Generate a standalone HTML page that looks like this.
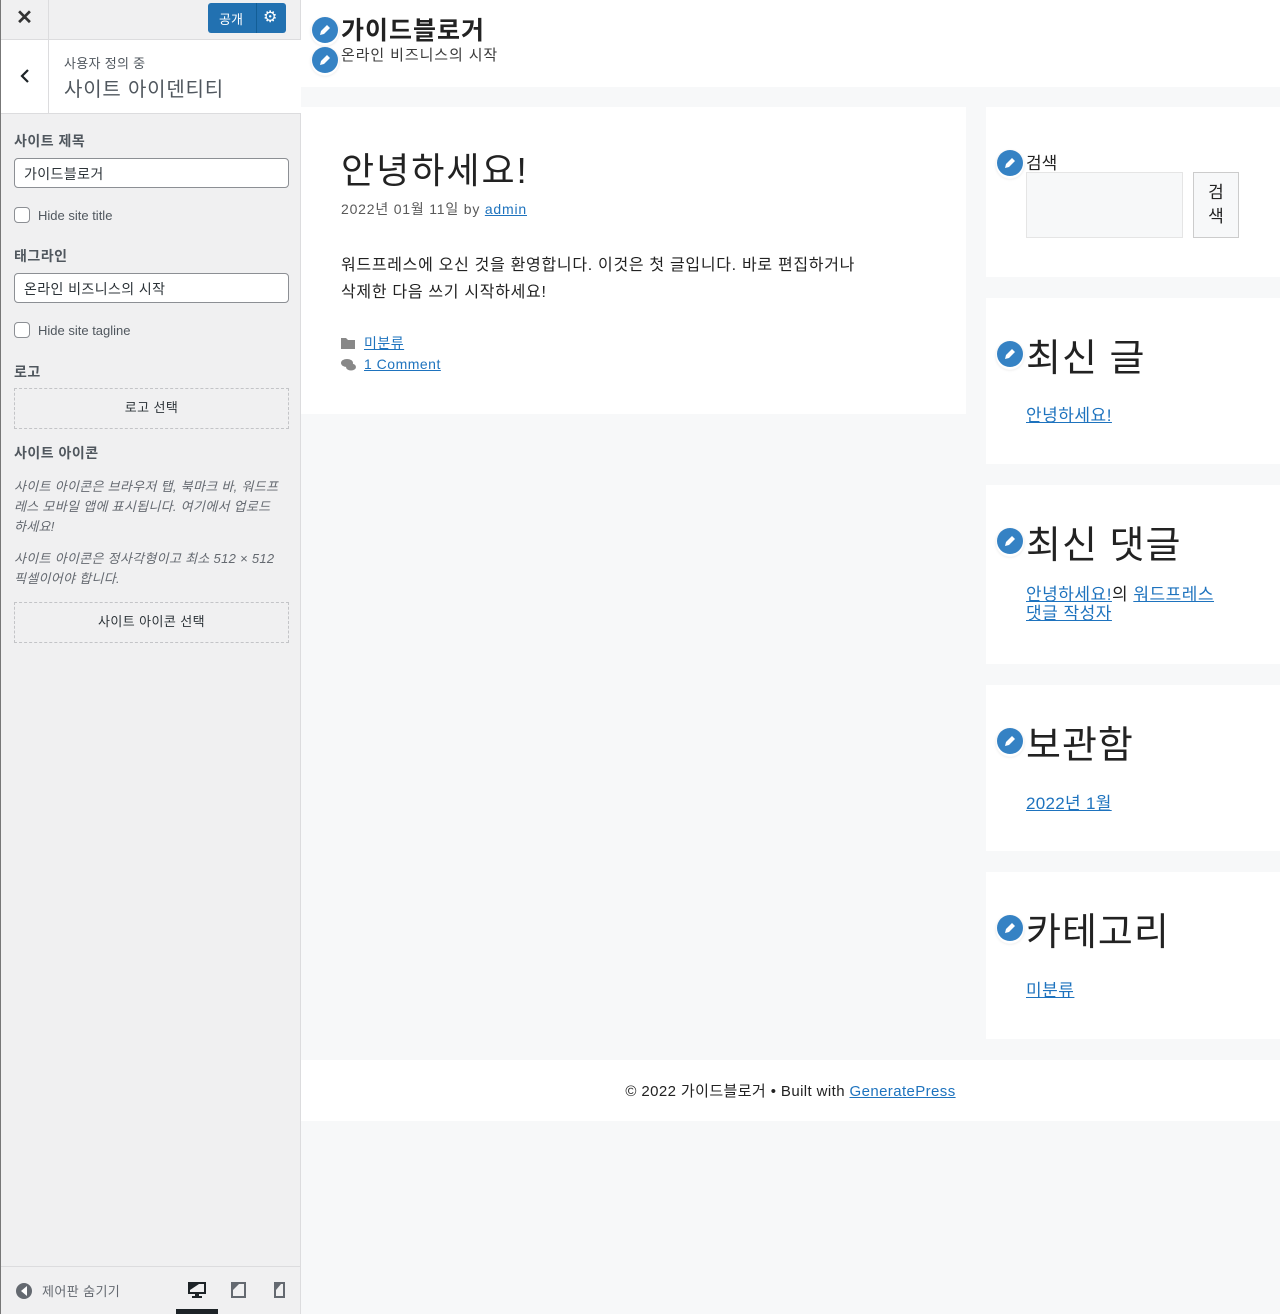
<!DOCTYPE html>
<html><head><meta charset="utf-8"><style>
*{box-sizing:border-box;margin:0;padding:0}
body{width:1280px;height:1314px;position:relative;overflow:hidden;background:#f7f8f9;font-family:"Liberation Sans","Noto Sans CJK KR",sans-serif;color:#222}
.a{position:absolute}
a{color:#1e73be;text-decoration:underline}
.pen{position:absolute;width:26px;height:26px;border-radius:50%;background:#3582c4;box-shadow:0 2px 1px 1px #fff,0 2px 3px rgba(0,0,0,.25)}
.pen svg{position:absolute;left:6px;top:6px}
#left{left:0;top:0;width:301px;height:1314px;background:#f0f0f1;border-right:1px solid #dcdcde;border-left:1px solid #777}
.lbl{font-size:14px;font-weight:bold;color:#50575e;letter-spacing:.5px}
.inp{position:absolute;left:13px;width:275px;height:30px;background:#fff;border:1px solid #8c8f94;border-radius:4px;font-size:14px;padding:5px 9px;color:#2c3338;letter-spacing:.4px}
.cb{position:absolute;left:13px;width:16px;height:16px;border:1px solid #8c8f94;border-radius:4px;background:#fff}
.cbl{position:absolute;left:37px;font-size:13px;color:#50575e}
.dash{position:absolute;left:13px;width:275px;border:1px dashed #c3c4c7;text-align:center;font-size:13px;color:#2c3338;letter-spacing:.4px}
.desc{position:absolute;left:13px;width:276px;font-size:13px;font-style:italic;color:#646970;line-height:20px;letter-spacing:.3px}
.w{position:absolute;left:986px;width:294px;background:#fff}
.wt{position:absolute;left:40px;font-size:38px;color:#222;line-height:1;letter-spacing:1px}
</style></head><body>
<div id="left" class="a">
 <div class="a" style="left:0;top:0;width:300px;height:40px;border-bottom:1px solid #dcdcde"></div>
 <div class="a" style="left:0;top:0;width:48px;height:40px;border-right:1px solid #dcdcde;font-size:20px;text-align:center;line-height:36px;color:#333;font-weight:bold">✕</div>
 <div class="a" style="left:207px;top:3px;width:78px;height:30px;background:#2271b1;border-radius:3px;color:#fff;font-size:13px">
  <span class="a" style="left:11px;top:6px">공개</span>
  <div class="a" style="left:48px;top:0;width:1px;height:30px;background:#135e96"></div>
  <span class="a" style="left:55px;top:4px;font-size:16px">⚙</span>
 </div>
 <div class="a" style="left:0;top:40px;width:300px;height:74px;background:#fff;border-bottom:1px solid #dcdcde"></div>
 <div class="a" style="left:0;top:40px;width:48px;height:73px;border-right:1px solid #dcdcde"></div>
 <svg class="a" style="left:18px;top:69px" width="12" height="14"><path d="M9 1L3 7l6 6" stroke="#1d2327" stroke-width="2.2" fill="none"/></svg>
 <div class="a" style="left:63px;top:53px;font-size:13px;color:#50575e;letter-spacing:.3px">사용자 정의 중</div>
 <div class="a" style="left:63px;top:73px;font-size:20px;color:#50575e;letter-spacing:.8px">사이트 아이덴티티</div>
 <div class="a lbl" style="left:13px;top:131px">사이트 제목</div>
 <div class="inp" style="top:158px">가이드블로거</div>
 <div class="cb" style="top:207px"></div><div class="cbl" style="top:208px">Hide site title</div>
 <div class="a lbl" style="left:13px;top:246px">태그라인</div>
 <div class="inp" style="top:273px">온라인 비즈니스의 시작</div>
 <div class="cb" style="top:322px"></div><div class="cbl" style="top:323px">Hide site tagline</div>
 <div class="a lbl" style="left:13px;top:362px">로고</div>
 <div class="dash" style="top:388px;height:41px;line-height:38px">로고 선택</div>
 <div class="a lbl" style="left:13px;top:443px">사이트 아이콘</div>
 <div class="desc" style="top:477px">사이트 아이콘은 브라우저 탭, 북마크 바, 워드프<br>레스 모바일 앱에 표시됩니다. 여기에서 업로드<br>하세요!</div>
 <div class="desc" style="top:549px">사이트 아이콘은 정사각형이고 최소 512 × 512<br>픽셀이어야 합니다.</div>
 <div class="dash" style="top:602px;height:41px;line-height:38px">사이트 아이콘 선택</div>
 <div class="a" style="left:0;top:1266px;width:300px;height:1px;background:#dcdcde"></div>
 <div class="a" style="left:15px;top:1283px;width:16px;height:16px;border-radius:50%;background:#646970"></div>
 <svg class="a" style="left:19px;top:1286px" width="8" height="10"><path d="M7 0L1 5l6 5z" fill="#fff"/></svg>
 <div class="a" style="left:41px;top:1281px;font-size:13px;color:#646970;letter-spacing:.4px">제어판 숨기기</div>
 <svg class="a" style="left:187px;top:1282px" width="18" height="16"><rect x="1" y="1" width="16" height="10" fill="none" stroke="#1d2327" stroke-width="2"/><path d="M2 2h9l-9 6z" fill="#1d2327"/><rect x="7" y="11" width="4" height="3" fill="#1d2327"/><rect x="4" y="14" width="10" height="2" fill="#1d2327"/></svg>
 <div class="a" style="left:175px;top:1309px;width:42px;height:5px;background:#1d2327"></div>
 <svg class="a" style="left:230px;top:1282px" width="15" height="16"><rect x="1" y="1" width="13" height="14" fill="none" stroke="#646970" stroke-width="2"/><path d="M2 2h6l-6 6z" fill="#646970"/></svg>
 <svg class="a" style="left:273px;top:1282px" width="11" height="16"><rect x="1" y="1" width="9" height="14" fill="none" stroke="#646970" stroke-width="2"/><path d="M2 2h5l-5 6z" fill="#646970"/></svg>
</div>

<!-- preview -->
<div class="a" style="left:301px;top:0;width:979px;height:87px;background:#fff"></div>
<div class="pen" style="left:312px;top:17px"><svg width="14" height="14"><path d="M2 12l1-4 6-6 3 3-6 6z" fill="#fff"/></svg></div>
<div class="pen" style="left:312px;top:47px"><svg width="14" height="14"><path d="M2 12l1-4 6-6 3 3-6 6z" fill="#fff"/></svg></div>
<div class="a" style="left:341px;top:11px;font-size:25px;font-weight:bold;color:#222;letter-spacing:1px">가이드블로거</div>
<div class="a" style="left:341px;top:44px;font-size:15px;color:#3a3a3a;letter-spacing:.9px">온라인 비즈니스의 시작</div>

<div class="a" style="left:301px;top:107px;width:665px;height:307px;background:#fff"></div>
<div class="a" style="left:341px;top:142px;font-size:36px;color:#222;letter-spacing:2px">안녕하세요!</div>
<div class="a" style="left:341px;top:199px;font-size:14px;color:#595959;letter-spacing:.8px">2022년 01월 11일 by <a>admin</a></div>
<div class="a" style="left:341px;top:252px;width:600px;font-size:16px;line-height:27px;color:#222;letter-spacing:.7px">워드프레스에 오신 것을 환영합니다. 이것은 첫 글입니다. 바로 편집하거나<br>삭제한 다음 쓰기 시작하세요!</div>
<svg class="a" style="left:341px;top:337px" width="14" height="12"><path d="M0 1h5l2 2h7v9H0z" fill="#888"/></svg>
<div class="a" style="left:364px;top:333px;font-size:14px;letter-spacing:.5px"><a>미분류</a></div>
<svg class="a" style="left:341px;top:358px" width="15" height="14"><ellipse cx="6" cy="5" rx="6" ry="4" fill="#888"/><ellipse cx="10" cy="9" rx="5" ry="3.5" fill="#888"/></svg>
<div class="a" style="left:364px;top:356px;font-size:14px;letter-spacing:.5px"><a>1 Comment</a></div>

<div class="w" style="top:107px;height:170px">
 <div class="pen" style="left:11px;top:43px"><svg width="14" height="14"><path d="M2 12l1-4 6-6 3 3-6 6z" fill="#fff"/></svg></div>
 <div class="a" style="left:40px;top:42px;font-size:17px">검색</div>
 <div class="a" style="left:40px;top:65px;width:157px;height:66px;background:#f7f8f9;border:1px solid #e5e5e5"></div>
 <div class="a" style="left:207px;top:65px;width:46px;height:66px;background:#f7f8f9;border:1px solid #ccc;font-size:17px;text-align:center;line-height:24px;padding-top:8px;color:#222">검<br>색</div>
</div>
<div class="w" style="top:298px;height:166px">
 <div class="pen" style="left:11px;top:43px"><svg width="14" height="14"><path d="M2 12l1-4 6-6 3 3-6 6z" fill="#fff"/></svg></div>
 <div class="wt" style="top:42px">최신 글</div>
 <div class="a" style="left:40px;top:103px;font-size:17px;letter-spacing:.5px"><a>안녕하세요!</a></div>
</div>
<div class="w" style="top:485px;height:179px">
 <div class="pen" style="left:11px;top:43px"><svg width="14" height="14"><path d="M2 12l1-4 6-6 3 3-6 6z" fill="#fff"/></svg></div>
 <div class="wt" style="top:42px">최신 댓글</div>
 <div class="a" style="left:40px;top:100px;width:205px;font-size:17px;line-height:19px;letter-spacing:.5px"><a>안녕하세요!</a>의 <a>워드프레스</a><br><a>댓글 작성자</a></div>
</div>
<div class="w" style="top:685px;height:166px">
 <div class="pen" style="left:11px;top:43px"><svg width="14" height="14"><path d="M2 12l1-4 6-6 3 3-6 6z" fill="#fff"/></svg></div>
 <div class="wt" style="top:42px">보관함</div>
 <div class="a" style="left:40px;top:104px;font-size:17px;letter-spacing:.3px"><a>2022년 1월</a></div>
</div>
<div class="w" style="top:872px;height:167px">
 <div class="pen" style="left:11px;top:43px"><svg width="14" height="14"><path d="M2 12l1-4 6-6 3 3-6 6z" fill="#fff"/></svg></div>
 <div class="wt" style="top:42px">카테고리</div>
 <div class="a" style="left:40px;top:104px;font-size:17px;letter-spacing:.5px"><a>미분류</a></div>
</div>

<div class="a" style="left:301px;top:1060px;width:979px;height:61px;background:#fff"></div>
<div class="a" style="left:301px;top:1080px;width:979px;text-align:center;font-size:15px;color:#222;letter-spacing:.4px">© 2022 가이드블로거 • Built with <a>GeneratePress</a></div>
</body></html>
